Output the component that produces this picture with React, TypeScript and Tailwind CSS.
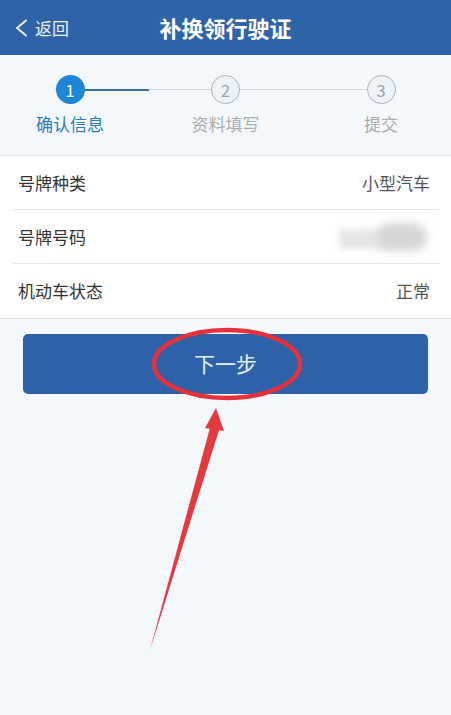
const font = { fontFamily: '"Noto Sans CJK SC", "Noto Sans", sans-serif' }

const steps = [
  { n: 1, label: '确认信息', active: true },
  { n: 2, label: '资料填写', active: false },
  { n: 3, label: '提交', active: false },
]

const rows = [
  { label: '号牌种类', value: '小型汽车' },
  { label: '号牌号码', value: '' },
  { label: '机动车状态', value: '正常' },
]

export default function App() {
  return (
    <div className="relative h-[715px] w-[451px] overflow-hidden bg-[#f5f8fa]" style={font}>
      {/* Header */}
      <header className="relative flex h-[55px] items-center justify-center bg-[#2e63a8] text-white">
        <div className="absolute left-[14px] top-0 flex h-full items-center gap-[7px] text-[17px] text-[#eaf2fb]">
          <svg width="14" height="18" viewBox="0 0 14 18" fill="none">
            <path d="M12 1.5 L3 9 L12 16.5" stroke="#eaf2fb" strokeWidth="2" strokeLinecap="round" strokeLinejoin="round" />
          </svg>
          <span>返回</span>
        </div>
        <h1 className="text-[22px] font-bold">补换领行驶证</h1>
      </header>

      {/* Steps */}
      <div className="relative h-[101px] border-b border-[#dfe4e8] bg-[#f4f8fa] px-[30px] pt-[20px]">
        <div className="absolute left-[85px] top-[34px] h-[2px] w-[64px] bg-[#3b6f98]" />
        <div className="absolute left-[149px] top-[34px] h-[1px] w-[63px] bg-[#cfd6dc]" />
        <div className="absolute left-[240px] top-[34px] h-[1px] w-[128px] bg-[#cfd6dc]" />
        <div className="relative flex justify-between">
          {steps.map((s) => (
            <div key={s.n} className="flex w-[80px] flex-col items-center">
              <div
                className={`flex h-[29px] w-[29px] items-center justify-center rounded-full text-[17px] ${
                  s.active ? 'bg-[#1d86d6] text-white' : 'border border-[#a9b4bd] bg-[#eef3f7] text-[#98a3ac]'
                }`}
              >
                {s.n}
              </div>
              <span className={`mt-[7px] whitespace-nowrap text-[17px] ${s.active ? 'text-[#2a7bbd]' : 'text-[#a7adb2]'}`}>
                {s.label}
              </span>
            </div>
          ))}
        </div>
      </div>

      {/* Info list */}
      <div className="border-b border-[#dadfe3] bg-white px-[12px]">
        {rows.map((r, i) => (
          <div
            key={r.label}
            className={`flex h-[54px] items-center justify-between px-[6px] text-[17px] ${
              i < rows.length - 1 ? 'border-b border-[#e3e6e9]' : ''
            }`}
          >
            <span className="text-[#333]">{r.label}</span>
            {r.value ? (
              <span className="pr-[3px] text-[#555]">{r.value}</span>
            ) : (
              <div className="relative mr-[2px] h-[32px] w-[92px]">
                <div className="absolute left-0 top-[8px] h-[20px] w-[52px] bg-[#e6e6e6] blur-[3px]" />
                <div className="absolute right-[4px] top-[2px] h-[28px] w-[50px] rounded-full bg-[#d6d6d6] blur-[4px]" />
              </div>
            )}
          </div>
        ))}
      </div>

      {/* Button */}
      <div className="px-[23px] pt-[15px]">
        <button className="flex h-[60px] w-full items-center justify-center rounded-[5px] bg-[#2d62a8] text-[21px] text-[#e3f2ff]">
          下一步
        </button>
      </div>

      {/* Annotation: ellipse and arrow */}
      <svg className="pointer-events-none absolute left-0 top-0" width="451" height="715" viewBox="0 0 451 715">
        <ellipse cx="227" cy="364" rx="73" ry="34" fill="none" stroke="#e5323a" strokeWidth="4.5" />
        <polygon points="150,650 211,424 220,427" fill="#e23a3f" />
        <polygon points="205,428 216,408 224,431" fill="#e23a3f" />
      </svg>
    </div>
  )
}
